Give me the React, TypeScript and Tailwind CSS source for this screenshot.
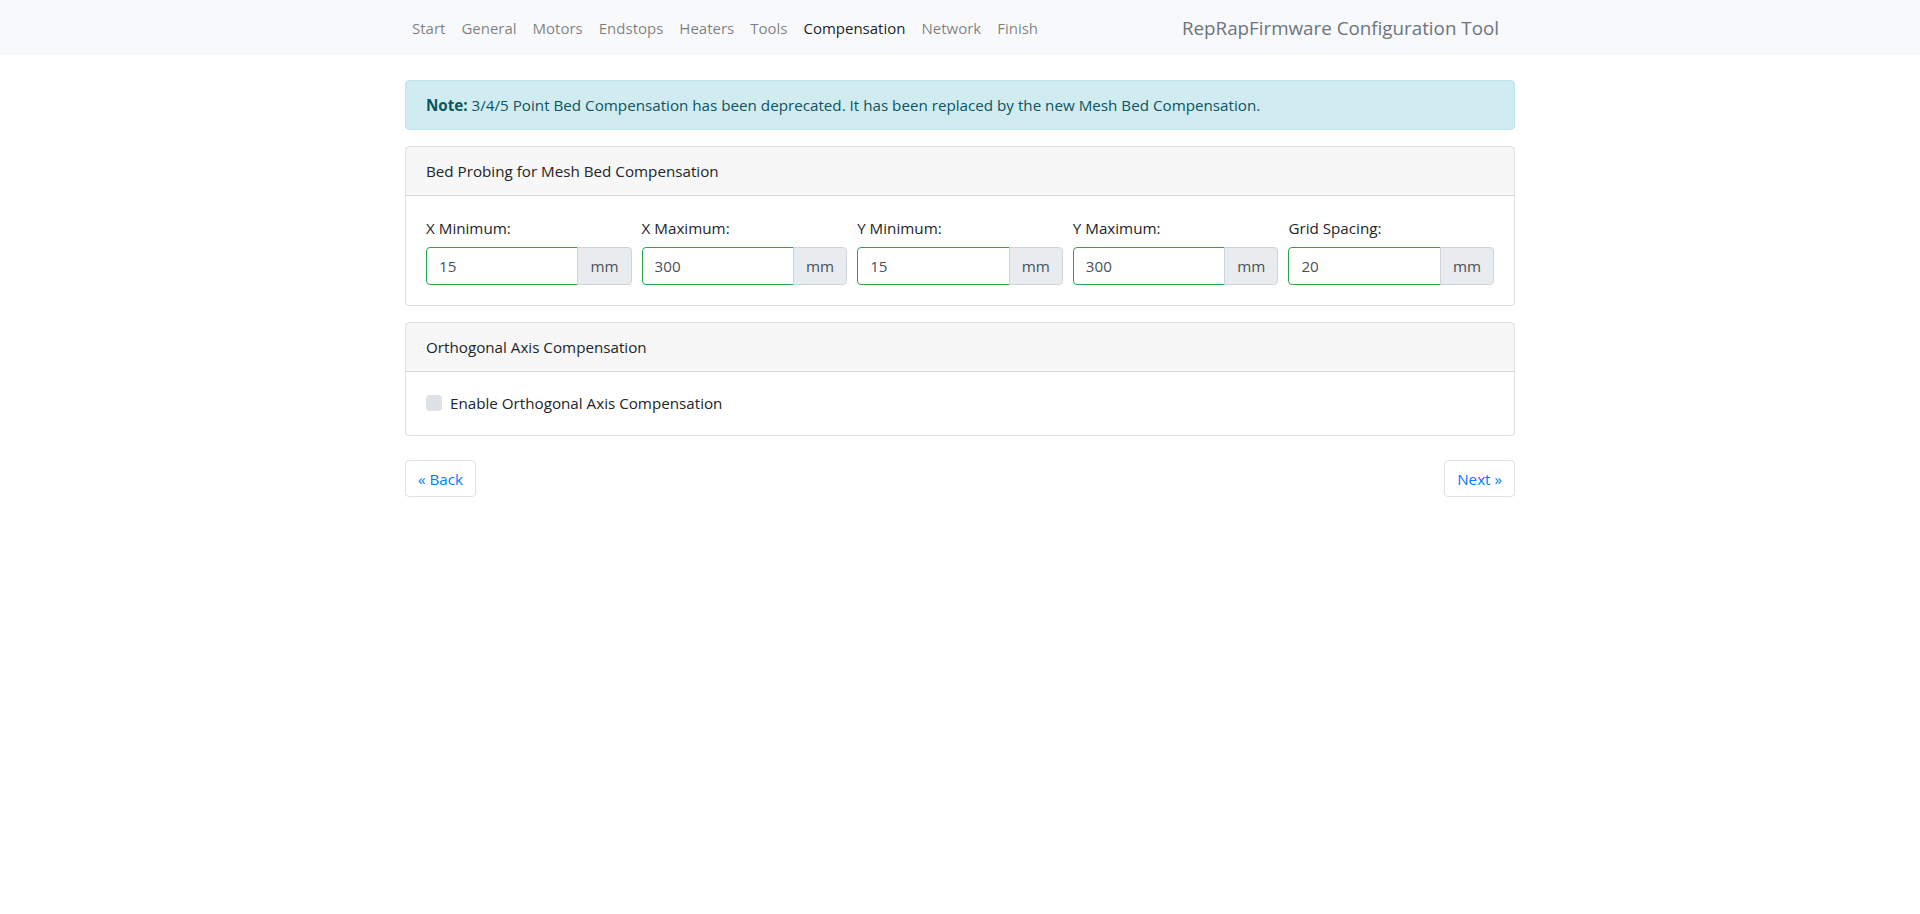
import React from "react";

const font = { fontFamily: '"Open Sans", "Noto Sans", sans-serif' };

const navItems = ["Start", "General", "Motors", "Endstops", "Heaters", "Tools", "Compensation", "Network", "Finish"];

const fields = [
  { label: "X Minimum:", value: "15" },
  { label: "X Maximum:", value: "300" },
  { label: "Y Minimum:", value: "15" },
  { label: "Y Maximum:", value: "300" },
  { label: "Grid Spacing:", value: "20" },
];

export default function App() {
  return (
    <div className="min-h-[914px] bg-white text-[15.2px] leading-[24px] text-[#212529]" style={font}>
      <nav className="h-[55px] bg-[#f8f9fa]">
        <div className="mx-auto flex h-full w-[1110px] items-center justify-between">
          <ul className="-ml-[1px] flex items-center">
            {navItems.map((n) => (
              <li key={n}>
                <a
                  className={
                    "block px-2 py-2 text-[15px] " +
                    (n === "Compensation" ? "text-[rgba(0,0,0,0.9)]" : "text-[rgba(0,0,0,0.5)]")
                  }
                >
                  {n}
                </a>
              </li>
            ))}
          </ul>
          <span className="mr-[16px] text-[18.8px] leading-[30px] text-[#6c757d]">RepRapFirmware Configuration Tool</span>
        </div>
      </nav>

      <main className="mx-auto w-[1110px] pt-[25px]">
        <div className="mb-4 rounded-[4px] border border-[#bee5eb] bg-[#d1ecf1] px-[20px] py-[12px] text-[#0c5460]">
          <b className="font-bold">Note:</b> 3/4/5 Point Bed Compensation has been deprecated. It has been replaced by the new Mesh Bed Compensation.
        </div>

        <div className="mb-4 rounded-[4px] border border-[rgba(0,0,0,0.125)]">
          <div className="border-b border-[rgba(0,0,0,0.125)] bg-[rgba(0,0,0,0.03)] px-[20px] py-[12px]">
            Bed Probing for Mesh Bed Compensation
          </div>
          <div className="grid grid-cols-5 gap-x-[10px] p-[20px]">
            {fields.map((f) => (
              <div key={f.label}>
                <label className="mb-[7px] block">{f.label}</label>
                <div className="flex h-[38px]">
                  <input
                    readOnly
                    value={f.value}
                    className="min-w-0 flex-1 rounded-l-[4px] border border-[#28a745] bg-white px-[12px] text-[#495057] outline-none"
                    style={font}
                  />
                  <span className="-ml-px flex items-center rounded-r-[4px] border border-[#ced4da] bg-[#e9ecef] px-[12px] text-[#495057]">
                    mm
                  </span>
                </div>
              </div>
            ))}
          </div>
        </div>

        <div className="rounded-[4px] border border-[rgba(0,0,0,0.125)]">
          <div className="border-b border-[rgba(0,0,0,0.125)] bg-[rgba(0,0,0,0.03)] px-[20px] py-[12px]">
            Orthogonal Axis Compensation
          </div>
          <div className="px-[20px] pb-[20px] pt-[19px]">
            <label className="flex items-center">
              <span className="mr-[8px] inline-block h-[16px] w-[16px] rounded-[4px] bg-[#dee2e6]" />
              <span>Enable Orthogonal Axis Compensation</span>
            </label>
          </div>
        </div>

        <div className="mt-[24px] flex justify-between">
          <button className="h-[37px] rounded-[4px] border border-[#dee2e6] bg-white px-[12px] text-[#007bff]" style={font}>
            « Back
          </button>
          <button className="h-[37px] rounded-[4px] border border-[#dee2e6] bg-white px-[12px] text-[#007bff]" style={font}>
            Next »
          </button>
        </div>
      </main>
    </div>
  );
}
